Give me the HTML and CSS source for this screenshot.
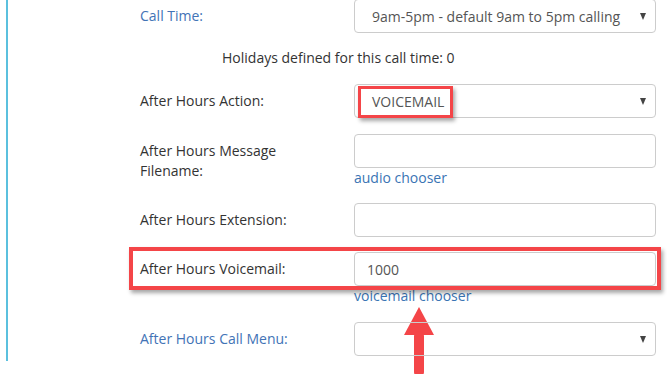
FILE: index.html
```html
<!DOCTYPE html>
<html>
<head>
<meta charset="utf-8">
<link rel="stylesheet" href="styles.css">
</head>
<body>
<div class="panel">
  <div class="row first">
    <div class="label blue">Call Time:</div>
    <div class="control">
      <div class="select"><span class="val">9am-5pm - default 9am to 5pm calling</span><span class="caret"></span></div>
    </div>
  </div>
  <div class="row note">Holidays defined for this call time: 0</div>
  <div class="row extra">
    <div class="label">After Hours Action:</div>
    <div class="control">
      <div class="select"><span class="val">VOICEMAIL</span><span class="caret"></span><span class="mark-small"></span></div>
    </div>
  </div>
  <div class="row extra">
    <div class="label">After Hours Message<br>Filename:</div>
    <div class="control">
      <div class="input"></div>
      <a class="link">audio chooser</a>
    </div>
  </div>
  <div class="row">
    <div class="label">After Hours Extension:</div>
    <div class="control">
      <div class="input"></div>
    </div>
  </div>
  <div class="row vm">
    <span class="mark-big"></span>
    <div class="label">After Hours Voicemail:</div>
    <div class="control">
      <div class="input text">1000</div>
      <a class="link">voicemail chooser</a>
    </div>
    <svg class="arrow" width="32" height="70" viewBox="0 0 32 70">
      <polygon points="16,0 31,28 1,28" fill="#f44548"/>
      <rect x="11" y="24" width="10" height="46" rx="5" fill="#f44548"/>
    </svg>
  </div>
  <div class="row extra">
    <div class="label blue">After Hours Call Menu:</div>
    <div class="control">
      <div class="select"><span class="val"></span><span class="caret"></span></div>
    </div>
  </div>
</div>
</body>
</html>
```

FILE: styles.css
```css
html, body {
  margin: 0;
  padding: 0;
  background: #fff;
  width: 667px;
  height: 374px;
  overflow: hidden;
  font-family: "Open Sans", "Noto Sans", sans-serif;
  font-size: 14px;
  color: #333;
}
.panel {
  margin-left: 6px;
  border-left: 2px solid #5bc0de;
  height: 361px;
  padding-left: 132px;
  box-sizing: border-box;
  display: flex;
  flex-direction: column;
  gap: 15px;
}
.row {
  display: flex;
  position: relative;
}
.row.first {
  margin-top: -1px;
}
.row.extra {
  margin-top: 1px;
}
.label {
  width: 214px;
  line-height: 20px;
  padding-top: 7px;
  color: #333;
}
.label.blue {
  color: #4273b6;
}
.control {
  width: 302px;
  display: flex;
  flex-direction: column;
}
.select, .input {
  height: 34px;
  box-sizing: border-box;
  border: 1px solid #ccc;
  border-radius: 4px;
  display: flex;
  align-items: center;
  position: relative;
  color: #555;
}
.select .val {
  padding-left: 17px;
  flex: 1;
}
.caret {
  width: 0;
  height: 0;
  border-left: 3.5px solid transparent;
  border-right: 3.5px solid transparent;
  border-top: 7px solid #444;
  margin-right: 9px;
}
.input.text {
  padding-left: 12px;
}
.row.note {
  padding-left: 82px;
  line-height: 20px;
}
.link {
  color: #3a74b4;
  line-height: 20px;
}
.mark-small {
  position: absolute;
  left: 3px;
  top: 1px;
  width: 95px;
  height: 32px;
  box-sizing: border-box;
  border: 3px solid #f44548;
  box-shadow: 2px 3px 4px rgba(0,0,0,0.35);
}
.mark-big {
  position: absolute;
  left: -11px;
  top: -5px;
  width: 532px;
  height: 43px;
  box-sizing: border-box;
  border: 4px solid #f44548;
  box-shadow: 2px 3px 4px rgba(0,0,0,0.35);
  pointer-events: none;
}
.arrow {
  position: absolute;
  left: 263px;
  top: 55px;
}
```
